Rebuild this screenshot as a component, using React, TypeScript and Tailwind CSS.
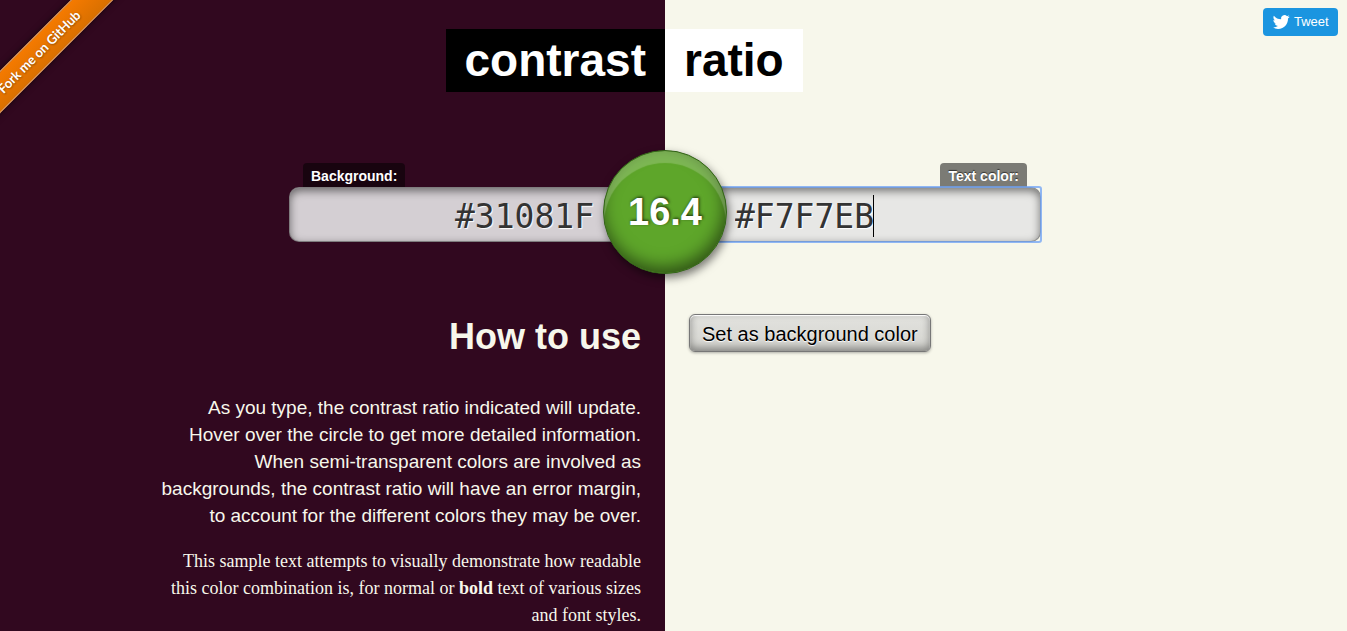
import { useState } from "react";

const fieldClass =
  "block h-[55px] w-full border border-black/40 pt-1 font-['DejaVu_Sans_Mono',monospace] text-[33px] text-[#333] outline-none [text-shadow:1px_1px_1px_white] shadow-[inset_0_3px_8px_rgba(0,0,0,0.5)]";

function Ribbon() {
  return (
    <div className="absolute left-0 top-0 size-[150px] overflow-hidden">
      <a
        href="#fork"
        className="absolute -left-[54px] top-[31px] flex h-[30px] w-[200px] -rotate-45 items-center justify-center border-y border-[#ffb566] bg-linear-to-b from-[#f57a00] to-[#d97000] pr-[18px] font-['Lato',sans-serif] text-[13px] font-bold text-white shadow-[0_0_6px_rgba(0,0,0,0.6)] [text-shadow:0_1px_2px_rgba(0,0,0,0.4)]"
      >
        Fork me on GitHub
      </a>
    </div>
  );
}

function TweetButton() {
  return (
    <a
      href="#tweet"
      className="absolute right-[9px] top-2 flex h-7 w-[75px] items-center gap-1 rounded-[4px] bg-[#1b95e0] pl-[9px] font-['Liberation_Sans',sans-serif] text-[13px] text-white"
    >
      <svg viewBox="0 0 24 24" className="size-[18px] shrink-0" fill="currentColor" aria-hidden="true">
        <path d="M23.643 4.937c-.835.37-1.732.62-2.675.733a4.67 4.67 0 0 0 2.048-2.578 9.3 9.3 0 0 1-2.958 1.13 4.66 4.66 0 0 0-7.938 4.25 13.229 13.229 0 0 1-9.602-4.868c-.4.69-.63 1.49-.63 2.342A4.66 4.66 0 0 0 3.96 9.824a4.647 4.647 0 0 1-2.11-.583v.06a4.66 4.66 0 0 0 3.737 4.568 4.692 4.692 0 0 1-2.104.08 4.661 4.661 0 0 0 4.352 3.234 9.348 9.348 0 0 1-5.786 1.995 9.5 9.5 0 0 1-1.112-.065 13.175 13.175 0 0 0 7.14 2.093c8.57 0 13.255-7.098 13.255-13.254 0-.2-.005-.402-.014-.602a9.47 9.47 0 0 0 2.323-2.41z" />
      </svg>
      Tweet
    </a>
  );
}

export default function App() {
  const [background, setBackground] = useState("#31081F");
  const [foreground, setForeground] = useState("#F7F7EB");

  return (
    <div className="relative min-h-screen bg-[#f7f7eb] pr-[17px] font-['Liberation_Sans',Arial,sans-serif]">
      <main className="min-h-screen bg-[linear-gradient(to_right,#31081f_50%,#f7f7eb_50%)] pt-[29px]">
        <h1 className="grid grid-cols-2 text-[46px] font-bold leading-[63px]">
          <span className="justify-self-end bg-black px-[19px] text-white">contrast</span>
          <span className="justify-self-start bg-white px-[19px] text-black">ratio</span>
        </h1>

        <form className="relative mx-auto mt-[71px] grid max-w-[752px] grid-cols-2">
          <div className="flex flex-col items-start">
            <label
              htmlFor="background"
              className="ml-[14px] h-6 rounded-t-[4px] bg-black/50 px-2 text-[14px] font-bold leading-[26px] text-white"
            >
              Background:
            </label>
            <input
              id="background"
              value={background}
              onChange={(e) => setBackground(e.target.value)}
              className={`${fieldClass} rounded-l-[10px] bg-[#d4cfd3] pr-[70px] text-right`}
            />
          </div>
          <div className="relative flex flex-col items-end">
            <label
              htmlFor="foreground"
              className="mr-[14px] h-6 rounded-t-[4px] bg-black/50 px-2 text-[14px] font-bold leading-[26px] text-white [text-shadow:0_-1px_1px_rgba(0,0,0,0.6)]"
            >
              Text color:
            </label>
            <div className="w-full rounded-[2px] outline-2 -outline-offset-1 outline-[#6ea2f5]/75">
              <input
                id="foreground"
                value={foreground}
                onChange={(e) => setForeground(e.target.value)}
                className={`${fieldClass} rounded-r-[10px] bg-[#e7e7e5] pl-[69px]`}
              />
            </div>
            <span className="absolute left-[208px] top-8 h-[42px] w-px bg-black" />
          </div>
          <output
            htmlFor="background foreground"
            className="absolute left-1/2 top-[49px] flex size-[124px] -translate-x-1/2 -translate-y-1/2 items-center justify-center rounded-full border border-[#34631a] bg-[#5ea62a] text-[38px] font-bold text-white [text-shadow:1px_-1px_3px_rgba(0,0,0,0.7)] shadow-[inset_0_12px_1px_rgba(255,255,255,0.2),inset_-2px_-6px_16px_rgba(0,0,0,0.5),2px_4px_8px_rgba(0,0,0,0.5)]"
          >
            16.4
          </output>
        </form>

        <div className="mt-[72px] grid grid-cols-2">
          <section className="flex flex-col items-end pr-6 text-right text-[#f7f7eb]">
            <h2 className="text-[36px] font-bold leading-[46px]">How to use</h2>
            <p className="mt-[34px] max-w-[480px] text-[19px] leading-[27px]">
              As you type, the contrast ratio indicated will update. Hover over the circle to get more detailed
              information. When semi-transparent colors are involved as backgrounds, the contrast ratio will have an
              error margin, to account for the different colors they may be over.
            </p>
            <p className="mt-[19px] max-w-[480px] font-['Liberation_Serif',serif] text-[18px] leading-[27px]">
              This sample text attempts to visually demonstrate how readable this color combination is, for normal or{" "}
              <strong>bold</strong> text of various sizes and font styles.
            </p>
          </section>
          <div className="pl-6">
            <button
              type="button"
              onClick={() => setBackground(foreground)}
              className="h-[38px] rounded-[6px] border border-[#777] bg-linear-to-b from-[#e2e2de] to-[#d5d5d0] px-3 pt-px text-[20px] text-black [text-shadow:0_1px_1px_white] shadow-[inset_0_1px_1px_white,inset_0_-3px_8px_rgba(0,0,0,0.4),0_1px_3px_rgba(0,0,0,0.3)]"
            >
              Set as background color
            </button>
          </div>
        </div>
      </main>
      <Ribbon />
      <TweetButton />
    </div>
  );
}
